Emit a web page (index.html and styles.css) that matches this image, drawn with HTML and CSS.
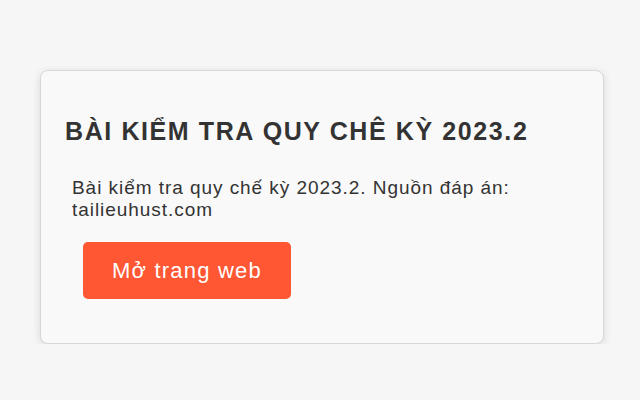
FILE: index.html
```html
<!DOCTYPE html>
<html lang="vi">
<head>
    <meta charset="UTF-8">
    <meta name="viewport" content="width=device-width, initial-scale=1.0">
    <title>Bài kiểm tra quy chế kỳ 2023.2</title>
    <link rel="stylesheet" href="styles.css">
</head>
<body>
    <main class="card">
        <h2>BÀI KIỂM TRA QUY CHÊ KỲ 2023.2</h2>
        <p>Bài kiểm tra quy chế kỳ 2023.2. Nguồn đáp án: tailieuhust.com</p>
        <a class="btn" href="#">Mở trang web</a>
    </main>
</body>
</html>
```

FILE: styles.css
```css
body {
    font-family: "Liberation Sans", Arial, sans-serif;
    margin: 0;
    padding: 70px 36px 0 40px;
    background-color: #f6f6f6;
    color: #333;
}
.card {
    display: block;
    background: #f9f9f9;
    border: 1px solid #d8d8d8;
    border-radius: 8px;
    box-shadow: 0 2px 8px rgba(0, 0, 0, 0.12);
    padding: 26px 24px;
}
.card h2 {
    font-size: 25px;
    letter-spacing: 1.6px;
    margin: 20px 0 31px;
    color: #333;
}
.card p {
    font-size: 19px;
    letter-spacing: 0.95px;
    line-height: 22px;
    margin: 0 7px 21px;
}
.btn {
    display: inline-block;
    margin: 0 0 18px 18px;
    padding: 17px 29px;
    background: #ff5733;
    color: #fff;
    font-size: 22px;
    letter-spacing: 1.2px;
    line-height: 23px;
    border-radius: 5px;
    text-decoration: none;
}
```
